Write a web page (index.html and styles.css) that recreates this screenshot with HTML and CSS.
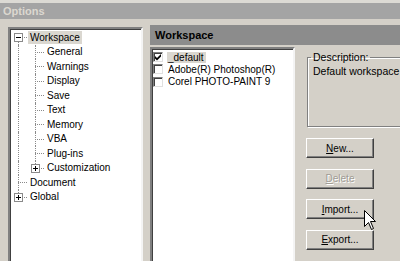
FILE: index.html
```html
<!DOCTYPE html>
<html>
<head>
    <meta charset="UTF-8">
    <title>Options</title>
    <link rel="stylesheet" href="styles.css">
</head>
<body>
    <div class="window">
        <div class="title-bar">Options</div>
        <div class="dialog-body">
            <div class="tree-panel">
                <div class="tree-row">
                    <span class="cell first"><span class="expander minus"></span></span>
                    <span class="node selected">Workspace</span>
                </div>
                <div class="tree-row"><span class="cell pass"></span><span class="cell tee"></span><span class="node">General</span></div>
                <div class="tree-row"><span class="cell pass"></span><span class="cell tee"></span><span class="node">Warnings</span></div>
                <div class="tree-row"><span class="cell pass"></span><span class="cell tee"></span><span class="node">Display</span></div>
                <div class="tree-row"><span class="cell pass"></span><span class="cell tee"></span><span class="node">Save</span></div>
                <div class="tree-row"><span class="cell pass"></span><span class="cell tee"></span><span class="node">Text</span></div>
                <div class="tree-row"><span class="cell pass"></span><span class="cell tee"></span><span class="node">Memory</span></div>
                <div class="tree-row"><span class="cell pass"></span><span class="cell tee"></span><span class="node">VBA</span></div>
                <div class="tree-row"><span class="cell pass"></span><span class="cell tee"></span><span class="node">Plug-ins</span></div>
                <div class="tree-row"><span class="cell pass"></span><span class="cell last"><span class="expander plus"></span></span><span class="node">Customization</span></div>
                <div class="tree-row"><span class="cell tee"></span><span class="node">Document</span></div>
                <div class="tree-row"><span class="cell last"><span class="expander plus"></span></span><span class="node">Global</span></div>
            </div>

            <div class="page">
                <div class="page-header">Workspace</div>
                <div class="page-body">
                    <div class="workspace-list">
                        <div class="list-item">
                            <span class="checkbox">
                                <svg width="7" height="7" viewBox="0 0 7 7"><path d="M0 2 L2 4 L6 0 L6 2.5 L2 6.5 L0 4.5 Z" fill="#000"/></svg>
                            </span>
                            <span class="item-label selected">_default</span>
                        </div>
                        <div class="list-item">
                            <span class="checkbox"></span>
                            <span class="item-label">Adobe(R) Photoshop(R)</span>
                        </div>
                        <div class="list-item">
                            <span class="checkbox"></span>
                            <span class="item-label">Corel PHOTO-PAINT 9</span>
                        </div>
                    </div>

                    <div class="side">
                        <fieldset class="description">
                            <legend>Description:</legend>
                            <div>Default workspace</div>
                        </fieldset>
                        <div class="button-stack">
                            <button class="win-button"><u>N</u>ew...</button>
                            <button class="win-button" disabled><u>D</u>elete</button>
                            <button class="win-button"><u>I</u>mport...</button>
                            <button class="win-button"><u>E</u>xport...</button>
                        </div>
                    </div>
                </div>
            </div>
        </div>

        <svg class="pointer" width="13" height="21" viewBox="0 0 13 21">
            <path d="M0.5 0.5 L0.5 16.5 L4.5 12.5 L7.5 19.5 L9.5 18.5 L6.5 11.5 L11.5 11.5 Z" fill="#fff" stroke="#000" stroke-width="1"/>
        </svg>
    </div>
</body>
</html>
```

FILE: styles.css
```css
body {
    margin: 0;
    height: 100vh;
    overflow: hidden;
    background-color: #d4d0c8;
    font-family: "Liberation Sans", Arial, sans-serif;
    font-size: 10px;
    color: #000;
}

.window {
    position: relative;
    height: 100%;
    border-top: 3px solid #dcdad4;
}

.title-bar {
    height: 16px;
    line-height: 16px;
    padding-left: 3px;
    background-color: #a4a4a4;
    color: #dcd8d0;
    font-weight: bold;
    font-size: 11px;
}

.dialog-body {
    display: flex;
    gap: 7px;
    padding: 6px 0 0 8px;
}

/* Tree on the left */
.tree-panel {
    flex: none;
    width: 131px;
    height: 260px;
    margin-top: 2px;
    background-color: #fff;
    border-top: 2px solid #808080;
    border-left: 2px solid #808080;
    border-right: 2px solid #f4f4f4;
    box-shadow: inset 1px 1px 0 #404040;
    padding-top: 1px;
}

.tree-row {
    display: flex;
    align-items: center;
    height: 14.5px;
}

.cell {
    flex: none;
    width: 17px;
    height: 100%;
    position: relative;
}

.cell::before,
.cell::after {
    content: "";
    position: absolute;
}

.cell.pass::before,
.cell.tee::before {
    top: 0;
    bottom: 0;
    left: 8px;
    border-left: 1px dotted #8a8a8a;
}

.cell.last::before {
    top: 0;
    height: 50%;
    left: 8px;
    border-left: 1px dotted #8a8a8a;
}

.cell.first::before {
    top: 50%;
    bottom: 0;
    left: 8px;
    border-left: 1px dotted #8a8a8a;
}

.cell.tee::after,
.cell.last::after,
.cell.first::after {
    top: 50%;
    left: 8px;
    right: 0;
    border-top: 1px dotted #8a8a8a;
}

.expander {
    position: absolute;
    z-index: 1;
    left: 4px;
    top: 50%;
    width: 7px;
    height: 7px;
    margin-top: -4px;
    background-color: #fff;
    border: 1px solid #8a8a8a;
}

.expander::before,
.expander::after {
    content: "";
    position: absolute;
    background-color: #000;
}

.expander::before {
    left: 1px;
    top: 3px;
    width: 5px;
    height: 1px;
}

.expander.plus::after {
    left: 3px;
    top: 1px;
    width: 1px;
    height: 5px;
}

.node {
    padding: 1px 2px;
    margin-left: 1px;
    white-space: nowrap;
}

.node.selected {
    background-color: #dad7d0;
}

/* Right hand page */
.page {
    flex: 1;
    display: flex;
    flex-direction: column;
}

.page-header {
    height: 20px;
    line-height: 20px;
    padding-left: 5px;
    background-color: #8c8c8c;
    font-weight: bold;
    font-size: 11px;
    color: #000;
}

.page-body {
    display: flex;
    padding-top: 2px;
}

.workspace-list {
    flex: none;
    width: 140px;
    height: 240px;
    background-color: #fff;
    border-top: 2px solid #808080;
    border-left: 2px solid #808080;
    border-right: 2px solid #f4f4f4;
    box-shadow: inset 1px 1px 0 #404040;
    padding: 2px 0 0 1px;
}

.list-item {
    display: flex;
    align-items: center;
    gap: 4px;
    height: 12.3px;
}

.checkbox {
    flex: none;
    display: flex;
    align-items: center;
    justify-content: center;
    width: 8px;
    height: 8px;
    background-color: #fff;
    border: 1px solid #808080;
    border-right-color: #e0e0e0;
    border-bottom-color: #e0e0e0;
    box-shadow: inset 1px 1px 0 #404040;
}

.item-label {
    padding: 0 2px 0 1px;
    white-space: nowrap;
}

.item-label.selected {
    background-color: #dad7d0;
}

.side {
    flex: none;
    width: 110px;
    margin-left: 11px;
}

.description {
    margin: 4px 0 0 1px;
    padding: 0 3px;
    height: 76px;
    box-sizing: border-box;
    border: 1px solid #808080;
    box-shadow: inset 1px 1px 0 #fff, 1px 1px 0 #fff;
    font-size: 10.5px;
}

.description legend {
    padding: 0 2px;
    line-height: 12px;
}

.description div {
    padding: 2px 0 0 2px;
}

.button-stack {
    display: flex;
    flex-direction: column;
    gap: 10.5px;
    margin-top: 11px;
}

.win-button {
    width: 68px;
    height: 20px;
    padding: 0;
    font-family: "Liberation Sans", Arial, sans-serif;
    font-size: 10px;
    color: #000;
    background-color: #d4d0c8;
    border: 1px solid;
    border-color: #fff #404040 #404040 #fff;
    box-shadow: inset -1px -1px 0 #808080;
}

.win-button:disabled {
    color: #a09c94;
    text-shadow: 1px 1px 0 #fff;
}

/* mouse pointer over the Import button */
.pointer {
    position: absolute;
    left: 364px;
    top: 207px;
}
```
